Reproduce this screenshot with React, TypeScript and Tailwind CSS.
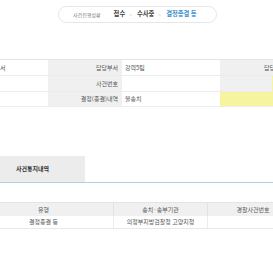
import React from "react";

const font = { fontFamily: '"Noto Sans CJK KR", "Noto Sans", sans-serif' };

export default function App() {
  return (
    <div className="w-[273px] h-[270px] overflow-hidden bg-white relative" style={font}>
      <div className="pt-[6px] pl-[58px]">
        <div className="w-[159px] h-[17px] rounded-[9px] border border-[#e6e6e6] flex items-center text-[#444]">
          <span className="ml-[14px] text-[5px] text-[#777] leading-none">사건진행상황</span>
          <span className="ml-[13px] text-[6.3px] font-bold text-[#444] leading-none">접수</span>
          <span className="ml-[4px] text-[5px] text-[#ccc] leading-none">&gt;</span>
          <span className="ml-[5px] text-[6.3px] font-bold text-[#444] leading-none">수사중</span>
          <span className="ml-[4px] text-[5px] text-[#ccc] leading-none">&gt;</span>
          <span className="ml-[5px] text-[6.3px] font-bold text-[#3a8fcb] leading-none">결정종결 등</span>
        </div>
      </div>

      <div className="mt-[36px] w-[400px] text-[6px] text-[#555] leading-none border-t border-[#e4e4e4]">
        <div className="flex h-[16px] border-b border-[#ececec]">
          <div className="w-[48px] flex items-center">서</div>
          <div className="w-[74px] bg-[#f0f0f0] flex items-center justify-end pr-[4px]">담당부서</div>
          <div className="w-[98px] flex items-center pl-[3px]">강력5팀</div>
          <div className="w-[66px] bg-[#f0f0f0] flex items-center justify-end">담당검사</div>
        </div>
        <div className="flex h-[16px] border-b border-[#ececec]">
          <div className="w-[48px]"></div>
          <div className="w-[74px] bg-[#f0f0f0] flex items-center justify-end pr-[4px]">사건번호</div>
          <div className="w-[98px]"></div>
          <div className="w-[52px] bg-[#f0f0f0]"></div>
          <div className="w-[14px] bg-[#f7f4a0]"></div>
        </div>
        <div className="flex h-[15px] border-b border-[#ececec]">
          <div className="w-[48px]"></div>
          <div className="w-[74px] bg-[#f0f0f0] flex items-center justify-end pr-[4px]">결정(종결)내역</div>
          <div className="w-[98px] flex items-center pl-[3px]">불송치</div>
          <div className="w-[66px] bg-[#f7f4a0]"></div>
        </div>
      </div>

      <div className="mt-[49px] border-b border-[#a9d1ec]">
        <div className="w-[85px] h-[26px] bg-[#ececec] flex items-center pl-[16px] text-[6px] font-bold text-[#333] leading-none">
          사건통지내역
        </div>
      </div>

      <div className="mt-[19px] ml-[-26px] w-[420px] text-[6px] text-[#555] leading-none">
        <div className="flex h-[14px] bg-[#f0f0f0] border-t border-[#e4e4e4]">
          <div className="w-[140px] flex items-center justify-center border-r border-[#e2e2e2]">유형</div>
          <div className="w-[94px] flex items-center justify-center border-r border-[#e2e2e2]">송치·송부기관</div>
          <div className="w-[90px] flex items-center justify-center">경찰사건번호</div>
        </div>
        <div className="flex h-[13px] border-b border-[#e8e8e8]">
          <div className="w-[140px] flex items-center justify-center border-r border-[#ececec]">결정종결 등</div>
          <div className="w-[94px] flex items-center justify-center border-r border-[#ececec]">의정부지방검찰청 고양지청</div>
          <div className="w-[90px]"></div>
        </div>
      </div>
    </div>
  );
}
